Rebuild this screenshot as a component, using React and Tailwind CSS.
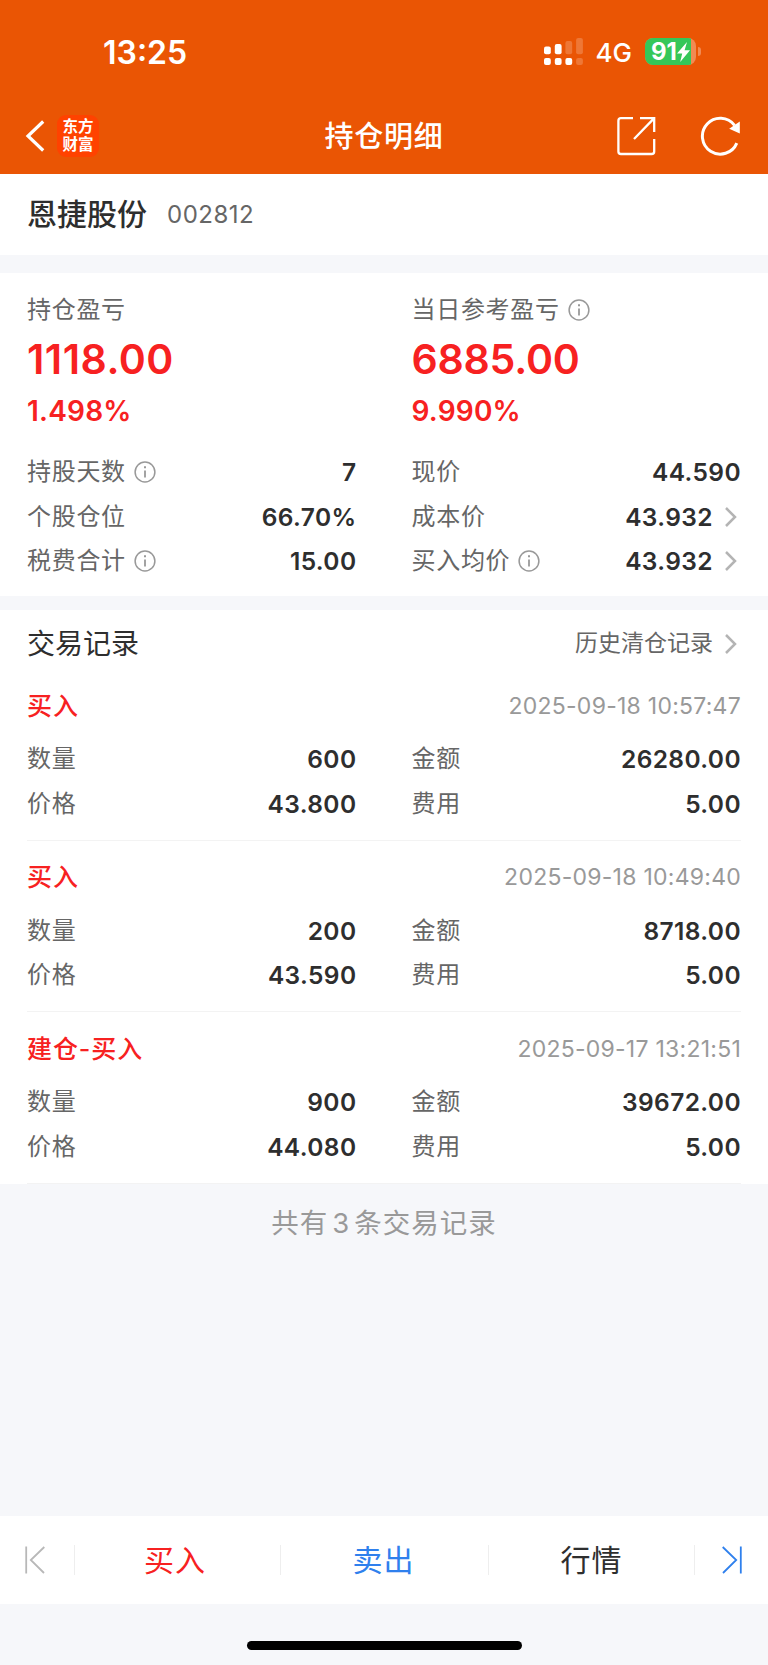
const position = {
  name: "恩捷股份",
  code: "002812",
  summary: [
    {
      label: "持仓盈亏",
      amount: "1118.00",
      percent: "1.498%",
      spacing: "tracking-[0.5px]",
    },
    {
      label: "当日参考盈亏",
      amount: "6885.00",
      percent: "9.990%",
      spacing: "tracking-[-0.2px]",
      info: true,
    },
  ],
  details: [
    { label: "持股天数", value: "7", info: true },
    { label: "现价", value: "44.590" },
    { label: "个股仓位", value: "66.70%" },
    { label: "成本价", value: "43.932", link: true },
    { label: "税费合计", value: "15.00", info: true },
    { label: "买入均价", value: "43.932", info: true, link: true },
  ],
};

const records = [
  {
    type: "买入",
    time: "2025-09-18 10:57:47",
    quantity: "600",
    amount: "26280.00",
    price: "43.800",
    fee: "5.00",
  },
  {
    type: "买入",
    time: "2025-09-18 10:49:40",
    quantity: "200",
    amount: "8718.00",
    price: "43.590",
    fee: "5.00",
  },
  {
    type: "建仓-买入",
    time: "2025-09-17 13:21:51",
    quantity: "900",
    amount: "39672.00",
    price: "44.080",
    fee: "5.00",
  },
];

function InfoIcon() {
  return (
    <svg
      className="ml-2 h-[22px] w-[22px] shrink-0"
      viewBox="0 0 22 22"
      fill="none"
      stroke="#999999"
      strokeWidth="1.5"
    >
      <circle cx="11" cy="11" r="9.9" />
      <path d="M11 9.4V16.6" strokeWidth="1.8" />
      <path d="M11 5.2V7.2" strokeWidth="2" />
    </svg>
  );
}

function ChevronRight() {
  return (
    <svg
      className="mr-1 ml-3 h-5 w-3 shrink-0"
      viewBox="0 0 12 20"
      fill="none"
      stroke="#b4b4b4"
      strokeWidth="2.5"
    >
      <path d="M1 1L10 10L1 19" />
    </svg>
  );
}

function SignalIcon() {
  return (
    <svg className="h-[27px] w-[39px]" viewBox="0 0 39 27" fill="#ffffff">
      <rect x="0" y="8.6" width="6.8" height="7.6" rx="2" />
      <rect x="10.8" y="6" width="6.8" height="10.2" rx="2" />
      <rect x="21.4" y="3" width="6.8" height="13.2" rx="2" opacity="0.2" />
      <rect x="32.1" y="0" width="6.8" height="16.2" rx="2" opacity="0.2" />
      <rect x="0" y="20" width="6.8" height="7" rx="2" />
      <rect x="10.8" y="20" width="6.8" height="7" rx="2" />
      <rect x="21.4" y="20" width="6.8" height="7" rx="2" />
      <rect x="32.1" y="20" width="6.8" height="7" rx="2" opacity="0.2" />
    </svg>
  );
}

function Battery() {
  return (
    <div className="flex items-center">
      <div className="flex h-[27px] w-[51px] overflow-hidden rounded-[8px] bg-[#f18a53]">
        <div className="flex w-[46px] items-center bg-[#34c759] pl-[6px]">
          <span className="text-[24px] leading-none font-bold">91</span>
          <svg className="h-5 w-[13px] shrink-0" viewBox="0 0 13 20" fill="#ffffff">
            <path d="M10 0L0 11.4H5.2L3.2 20L13 8.2H7.6Z" />
          </svg>
        </div>
      </div>
      <div className="ml-[2px] h-[9px] w-[3px] rounded-r-full bg-[#f18a53]" />
    </div>
  );
}

function Header() {
  return (
    <header className="h-[174px] bg-[#ea5504] text-white">
      <div className="flex h-[105px] items-center justify-between pr-[67px] pl-[103px]">
        <span className="pt-px text-[32px] leading-none font-semibold">13:25</span>
        <div className="flex items-center pb-[2px]">
          <SignalIcon />
          <span className="mr-[13px] ml-[13px] pt-[2px] text-[26px] leading-none font-medium">
            4G
          </span>
          <Battery />
        </div>
      </div>
      <div className="grid h-[61px] grid-cols-3 items-center">
        <div className="flex items-center pl-[25px]">
          <svg
            className="h-8 w-5"
            viewBox="0 0 20 32"
            fill="none"
            stroke="#ffffff"
            strokeWidth="3.2"
          >
            <path d="M18.2 1.5L3 16L18.2 30.5" />
          </svg>
          <div className="ml-3 flex h-[42px] w-[42px] flex-col items-center justify-center rounded-[9px] bg-[#ff4200] text-[15.5px] leading-[17.5px] font-bold">
            <span>东方</span>
            <span>财富</span>
          </div>
        </div>
        <h1 className="pt-px text-center text-[29px] leading-none font-medium tracking-[0.7px]">
          持仓明细
        </h1>
        <div className="flex items-center justify-end pr-7">
          <svg
            className="mr-11 h-10 w-10"
            viewBox="0 0 40 40"
            fill="none"
            stroke="#ffffff"
            strokeWidth="2.3"
          >
            <path d="M17 2.2H5Q2.4 2.2 2.4 4.8V35.4Q2.4 38 5 38H35.6Q38.2 38 38.2 35.4V23" />
            <path d="M24 2.2H38.2V16M38 2.4L18 23" />
          </svg>
          <svg className="h-10 w-10" viewBox="0 0 40 40" fill="none">
            <path
              d="M36.8 27.1A17.9 17.9 0 1 1 34.6 9.4"
              stroke="#ffffff"
              strokeWidth="3"
            />
            <path d="M39.8 5.6V17.4L29.2 12.8Z" fill="#ffffff" />
          </svg>
        </div>
      </div>
    </header>
  );
}

function Field({ label, value, info, link }) {
  return (
    <div className="flex h-[44.5px] items-center">
      <span className="text-[24px] leading-none tracking-[0.7px] text-[#666666]">
        {label}
      </span>
      {info && <InfoIcon />}
      <span className="ml-auto text-[24.5px] leading-none font-semibold tracking-[0.4px] text-[#2e2e2e]">
        {value}
      </span>
      {link && <ChevronRight />}
    </div>
  );
}

function Summary({ label, amount, percent, spacing, info }) {
  return (
    <div>
      <div className="flex h-[30px] items-center text-[24px] leading-none tracking-[0.7px] text-[#666666]">
        {label}
        {info && <InfoIcon />}
      </div>
      <div
        className={`mt-[9px] flex h-[50px] items-center text-[41px] leading-none font-semibold text-[#f72121] ${spacing}`}
      >
        {amount}
      </div>
      <div className="mt-[9px] flex h-9 items-center text-[28px] leading-none font-semibold tracking-[0.2px] text-[#f72121]">
        {percent}
      </div>
    </div>
  );
}

function TradeRecord({ record }) {
  return (
    <li className="h-[171.5px] border-b border-[#f3f3f3] pt-[13px]">
      <div className="flex h-12 items-center justify-between">
        <span className="text-[25px] leading-none font-medium tracking-[0.9px] text-[#f72121]">
          {record.type}
        </span>
        <span className="text-[23px] leading-none tracking-[0.25px] text-[#999999]">
          {record.time}
        </span>
      </div>
      <div className="mt-[7px] grid grid-cols-2 gap-x-[55px]">
        <Field label="数量" value={record.quantity} />
        <Field label="金额" value={record.amount} />
        <Field label="价格" value={record.price} />
        <Field label="费用" value={record.fee} />
      </div>
    </li>
  );
}

function BottomBar() {
  return (
    <nav className="flex h-[88px] items-center bg-white text-[30px] leading-none tracking-[1px]">
      <div className="flex h-[30px] w-[75px] items-center border-r border-[#eeeeee] pl-[25px]">
        <svg
          className="h-7 w-5"
          viewBox="0 0 20 28"
          fill="none"
          stroke="#b8b8b8"
          strokeWidth="1.8"
        >
          <path d="M1.2 0.5V27.5M19.3 1L5.8 14L19 27" />
        </svg>
      </div>
      <div className="flex h-[30px] w-[206px] items-center justify-center border-r border-[#eeeeee] pr-[5px] text-[#f72121]">
        买入
      </div>
      <div className="flex h-[30px] w-[208px] items-center justify-center border-r border-[#eeeeee] pr-[2px] text-[#2f80ed]">
        卖出
      </div>
      <div className="flex h-[30px] w-[206px] items-center justify-center border-r border-[#eeeeee] text-[#2e2e2e]">
        行情
      </div>
      <div className="flex h-[30px] w-[73px] items-center pl-[27px]">
        <svg
          className="h-7 w-5"
          viewBox="0 0 20 28"
          fill="none"
          stroke="#2f80ed"
          strokeWidth="1.8"
        >
          <path d="M18.8 0.5V27.5M0.7 1L14.2 14L1 27" />
        </svg>
      </div>
    </nav>
  );
}

function App() {
  return (
    <div className="flex h-[1665px] w-[768px] flex-col overflow-hidden bg-[#f6f7fa] font-[Inter,'Noto_Sans_CJK_SC',sans-serif]">
      <Header />

      {/* Stock name */}
      <section className="flex h-[81px] items-center bg-white px-[27px] pb-px">
        <h2 className="text-[30px] leading-none font-medium text-[#2e2e2e]">
          {position.name}
        </h2>
        <span className="ml-5 pt-px text-[24px] leading-none tracking-[0.5px] text-[#666666]">
          {position.code}
        </span>
      </section>

      {/* Profit and position details */}
      <section className="mt-[18px] h-[323px] bg-white px-[27px] pt-[22px]">
        <div className="grid grid-cols-2 gap-x-[55px]">
          {position.summary.map((item) => (
            <Summary key={item.label} {...item} />
          ))}
        </div>
        <div className="mt-[21px] grid grid-cols-2 gap-x-[55px]">
          {position.details.map((item) => (
            <Field key={item.label} {...item} />
          ))}
        </div>
      </section>

      {/* Trade records */}
      <section className="mt-[14px] bg-white px-[27px]">
        <div className="flex h-[59px] items-center justify-between pt-2">
          <h3 className="text-[28px] leading-none text-[#2e2e2e]">交易记录</h3>
          <div className="flex items-center text-[23px] leading-none text-[#666666]">
            历史清仓记录
            <ChevronRight />
          </div>
        </div>
        <ul>
          {records.map((record) => (
            <TradeRecord key={record.time} record={record} />
          ))}
        </ul>
      </section>
      <p className="mt-[26px] text-center text-[27.5px] leading-none tracking-[1px] text-[#999999]">
        共有<span className="mx-[4px]">3</span>条交易记录
      </p>

      <div className="mt-auto">
        <BottomBar />
        <div className="flex h-[61px] justify-center pt-[37px]">
          <div className="h-[9px] w-[275px] rounded-full bg-black" />
        </div>
      </div>
    </div>
  );
}

export default App;
